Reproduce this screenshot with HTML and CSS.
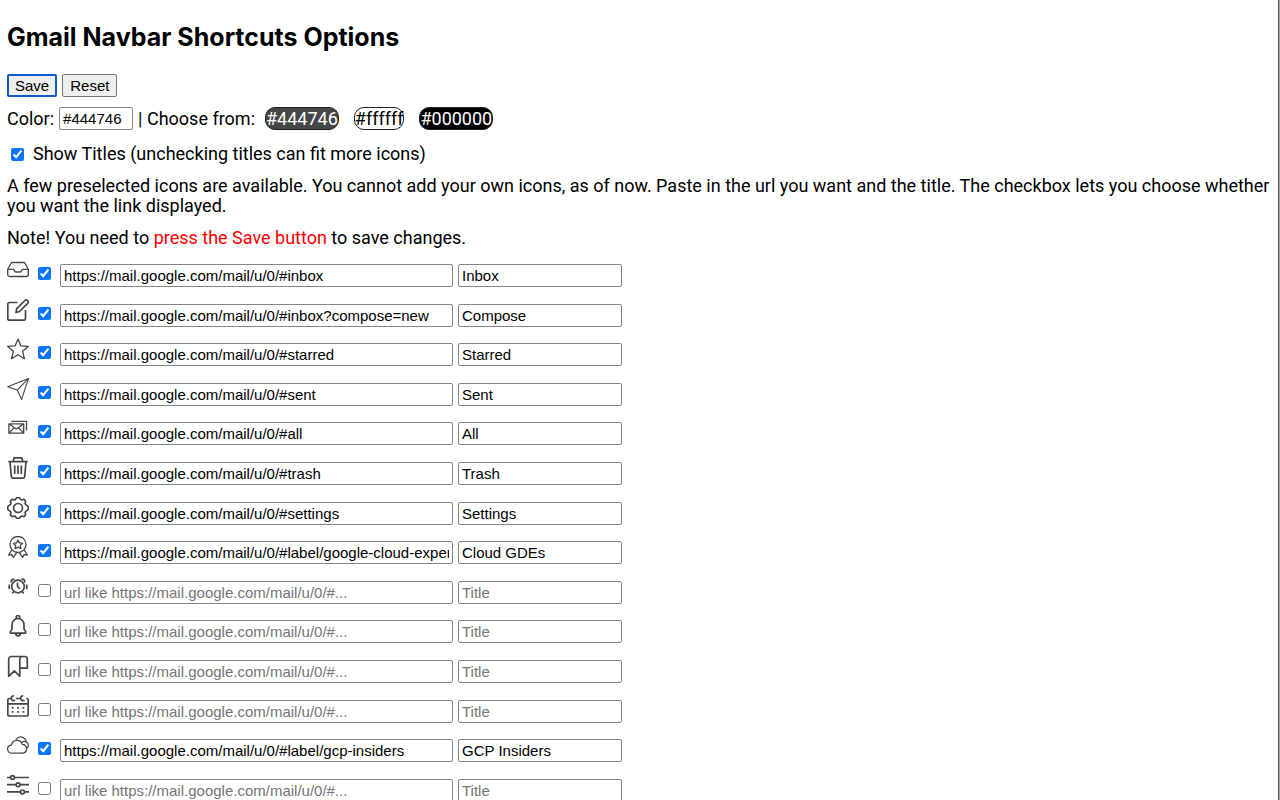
FILE: index.html
```html
<!DOCTYPE html>
<html lang="en">
<head>
<meta charset="utf-8">
<title>Gmail Navbar Shortcuts Options</title>
<link rel="stylesheet" href="styles.css">
</head>
<body>
<main class="page">
  <h1 class="title">Gmail Navbar Shortcuts Options</h1>
  <div class="actions">
    <button class="btn btn-primary" type="button">Save</button>
    <button class="btn" type="button">Reset</button>
  </div>
  <div class="colors">
    <label for="color">Color:</label>
    <input class="field color-field" id="color" type="text" value="#444746">
    <span>| Choose from:</span>
    <div class="swatches">
      <button class="swatch swatch-gray" type="button">#444746</button>
      <button class="swatch swatch-white" type="button">#ffffff</button>
      <button class="swatch swatch-black" type="button">#000000</button>
    </div>
  </div>
  <div class="show-titles">
    <input class="check" id="titles" type="checkbox" checked>
    <label for="titles">Show Titles (unchecking titles can fit more icons)</label>
  </div>
  <p class="text">A few preselected icons are available. You cannot add your own icons, as of now. Paste in the url you want and the title. The checkbox lets you choose whether you want the link displayed.</p>
  <p class="text">Note! You need to <span class="alert">press the Save button</span> to save changes.</p>

  <div class="shortcuts">
    <div class="shortcut">
      <svg class="icon" viewBox="0 0 22 22"><path d="M4.500 3.500h13l3.800 6.800v5.200a2 2 0 0 1-2 2H2.700a2 2 0 0 1-2-2v-5.200zM.7 10.300h5.800c.8 0 .9 2.700 2.300 2.700h4.400c1.400 0 1.500-2.700 2.300-2.700h5.800"/></svg>
      <input class="check" type="checkbox" aria-label="Show Inbox" checked>
      <input class="field url" type="text" aria-label="URL" placeholder="url like https://mail.google.com/mail/u/0/#..." value="https://mail.google.com/mail/u/0/#inbox">
      <input class="field name" type="text" aria-label="Title" placeholder="Title" value="Inbox">
    </div>
    <div class="shortcut">
      <svg class="icon bold" viewBox="0 0 22 22"><path d="M10.500 3.500H2.500a1.700 1.700 0 0 0-1.700 1.700v14.300a1.700 1.700 0 0 0 1.700 1.700h14.300a1.700 1.700 0 0 0 1.700-1.700V11M9 13.500l.7-3.800 8.200-8.200a1.800 1.800 0 0 1 2.600 0l.2.200a1.800 1.800 0 0 1 0 2.600l-8.200 8.200z"/></svg>
      <input class="check" type="checkbox" aria-label="Show Compose" checked>
      <input class="field url" type="text" aria-label="URL" placeholder="url like https://mail.google.com/mail/u/0/#..." value="https://mail.google.com/mail/u/0/#inbox?compose=new">
      <input class="field name" type="text" aria-label="Title" placeholder="Title" value="Compose">
    </div>
    <div class="shortcut">
      <svg class="icon" viewBox="0 0 22 22"><path d="M11 1l2.800 6.800 7.500.6-5.700 4.800 1.800 7.500-6.400-4-6.400 4 1.800-7.500L.7 8.400l7.500-.6z"/></svg>
      <input class="check" type="checkbox" aria-label="Show Starred" checked>
      <input class="field url" type="text" aria-label="URL" placeholder="url like https://mail.google.com/mail/u/0/#..." value="https://mail.google.com/mail/u/0/#starred">
      <input class="field name" type="text" aria-label="Title" placeholder="Title" value="Starred">
    </div>
    <div class="shortcut">
      <svg class="icon thin" viewBox="0 0 22 22"><path d="M21.400.6L.7 8.800l9.500 3.300 4.400 9.300zM21.400.6L10.200 12.100"/></svg>
      <input class="check" type="checkbox" aria-label="Show Sent" checked>
      <input class="field url" type="text" aria-label="URL" placeholder="url like https://mail.google.com/mail/u/0/#..." value="https://mail.google.com/mail/u/0/#sent">
      <input class="field name" type="text" aria-label="Title" placeholder="Title" value="Sent">
    </div>
    <div class="shortcut">
      <svg class="icon" viewBox="0 0 22 22"><path d="M1.900 6.800h14.800v9.400H1.900zM1.900 6.800l7.400 5.200 7.400-5.200M2.500 15.600l4.600-5M16.100 15.600l-4.600-5M4.300 4.300h15.200v9.300"/></svg>
      <input class="check" type="checkbox" aria-label="Show All" checked>
      <input class="field url" type="text" aria-label="URL" placeholder="url like https://mail.google.com/mail/u/0/#..." value="https://mail.google.com/mail/u/0/#all">
      <input class="field name" type="text" aria-label="Title" placeholder="Title" value="All">
    </div>
    <div class="shortcut">
      <svg class="icon bold" viewBox="0 0 22 22"><path d="M1.300 4.700h19.400M6.300 4.700l.7-3.800h8l.7 3.800M3 4.700l1.300 14.700a1.800 1.800 0 0 0 1.800 1.700h9.800a1.800 1.800 0 0 0 1.800-1.700L19 4.700M7.700 8.500v8.500M11 8.500v8.500M14.300 8.500v8.500"/></svg>
      <input class="check" type="checkbox" aria-label="Show Trash" checked>
      <input class="field url" type="text" aria-label="URL" placeholder="url like https://mail.google.com/mail/u/0/#..." value="https://mail.google.com/mail/u/0/#trash">
      <input class="field name" type="text" aria-label="Title" placeholder="Title" value="Trash">
    </div>
    <div class="shortcut">
      <svg class="icon bold" viewBox="0 0 22 22"><path d="M9 1.700a2.200 2.200 0 0 1 4 0c.5 1 1.300 1.400 2.400 1a2.200 2.200 0 0 1 2.900 2.900c-.4 1.100 0 1.900 1 2.400a3.200 3.200 0 0 1 0 6c-1 .5-1.400 1.300-1 2.400a2.200 2.200 0 0 1-2.900 2.900c-1.100-.4-1.900 0-2.400 1a2.200 2.200 0 0 1-4 0c-.5-1-1.300-1.400-2.400-1a2.200 2.200 0 0 1-2.900-2.900c.4-1.100 0-1.900-1-2.400a3.200 3.200 0 0 1 0-6c1-.5 1.400-1.300 1-2.400a2.200 2.200 0 0 1 2.900-2.900c1.100.4 1.900 0 2.400-1z"/><circle cx="11" cy="11" r="4.500"/></svg>
      <input class="check" type="checkbox" aria-label="Show Settings" checked>
      <input class="field url" type="text" aria-label="URL" placeholder="url like https://mail.google.com/mail/u/0/#..." value="https://mail.google.com/mail/u/0/#settings">
      <input class="field name" type="text" aria-label="Title" placeholder="Title" value="Settings">
    </div>
    <div class="shortcut">
      <svg class="icon" viewBox="0 0 22 22"><circle cx="11" cy="8.500" r="8"/><path d="M11 4l1.400 2.900 3.200.4-2.300 2.200.6 3.100-2.900-1.500-2.900 1.500.6-3.100-2.300-2.200 3.200-.4zM4.800 13.800L1.600 19l3.200-.3 1.600 2.700 3.500-5M17.200 13.800l3.200 5.200-3.200-.3-1.600 2.700-3.500-5"/></svg>
      <input class="check" type="checkbox" aria-label="Show Cloud GDEs" checked>
      <input class="field url" type="text" aria-label="URL" placeholder="url like https://mail.google.com/mail/u/0/#..." value="https://mail.google.com/mail/u/0/#label/google-cloud-experts">
      <input class="field name" type="text" aria-label="Title" placeholder="Title" value="Cloud GDEs">
    </div>
    <div class="shortcut">
      <svg class="icon bold" viewBox="0 0 22 22"><circle cx="11" cy="10.500" r="6.300"/><path d="M10.500 6.500v4l2.500 2.500M4.500 6.500a2.200 2.200 0 0 1 3-3M17.500 6.500a2.200 2.200 0 0 0-3-3M6.800 15.500l-1.500 2M15.200 15.500l1.500 2M2.500 8.500q-.8 2 0 4.500M19.500 8.500q.8 2 0 4.500"/></svg>
      <input class="check" type="checkbox" aria-label="Show shortcut 9">
      <input class="field url" type="text" aria-label="URL" placeholder="url like https://mail.google.com/mail/u/0/#...">
      <input class="field name" type="text" aria-label="Title" placeholder="Title">
    </div>
    <div class="shortcut">
      <svg class="icon bold" viewBox="0 0 22 22"><path d="M5 14V9.500a6 6 0 0 1 12 0V14c0 1 1.800 1.700 1.800 3.200 0 .7-.4 1-1 1H4.200c-.6 0-1-.3-1-1C3.200 15.700 5 15 5 14zM9.300 3.500V2.200a1.700 1.700 0 0 1 3.400 0v1.300M8.700 18.500a2.300 2.300 0 0 0 4.600 0"/></svg>
      <input class="check" type="checkbox" aria-label="Show shortcut 10">
      <input class="field url" type="text" aria-label="URL" placeholder="url like https://mail.google.com/mail/u/0/#...">
      <input class="field name" type="text" aria-label="Title" placeholder="Title">
    </div>
    <div class="shortcut">
      <svg class="icon bold" viewBox="0 0 22 22"><path d="M16.500 1.500H4.200a2.500 2.500 0 0 0-2.500 2.500v17.300l5.700-5.500 5.400 5.500V4.500a3 3 0 0 1 3-3h2a2.500 2.500 0 0 1 2.500 2.500v9.200h-7.500"/></svg>
      <input class="check" type="checkbox" aria-label="Show shortcut 11">
      <input class="field url" type="text" aria-label="URL" placeholder="url like https://mail.google.com/mail/u/0/#...">
      <input class="field name" type="text" aria-label="Title" placeholder="Title">
    </div>
    <div class="shortcut">
      <svg class="icon bold" viewBox="0 0 22 22"><path d="M3.800 3.500H2.300A1.500 1.500 0 0 0 .8 5v14.500A1.500 1.500 0 0 0 2.300 21h17.400a1.500 1.500 0 0 0 1.500-1.500V5a1.500 1.500 0 0 0-1.500-1.500h-.5M8.800 3.500h4.700M.8 8.800h20.400M6.800.9a2.400 2.400 0 1 0 1.300 4.300M16.200.9a2.400 2.400 0 1 0 1.300 4.300"/><path d="M4.700 12.800h1.800M10.100 12.800h1.800M15.500 12.800h1.800M4.700 16.800h1.800M10.100 16.800h1.800M15.500 16.800h1.800"/></svg>
      <input class="check" type="checkbox" aria-label="Show shortcut 12">
      <input class="field url" type="text" aria-label="URL" placeholder="url like https://mail.google.com/mail/u/0/#...">
      <input class="field name" type="text" aria-label="Title" placeholder="Title">
    </div>
    <div class="shortcut">
      <svg class="icon" viewBox="0 0 22 22"><path d="M4.800 19.200a4.100 4.100 0 0 1-.3-8.200 5.500 5.500 0 0 1 10.700-.7 4.500 4.500 0 0 1 .8 8.900zM9 5.500a5.500 5.500 0 0 1 10.100 2.300c2.700 1.400 2.800 5 .9 6.400M14.500 8.700a4.300 4.300 0 0 1 4.600-.9"/></svg>
      <input class="check" type="checkbox" aria-label="Show GCP Insiders" checked>
      <input class="field url" type="text" aria-label="URL" placeholder="url like https://mail.google.com/mail/u/0/#..." value="https://mail.google.com/mail/u/0/#label/gcp-insiders">
      <input class="field name" type="text" aria-label="Title" placeholder="Title" value="GCP Insiders">
    </div>
    <div class="shortcut">
      <svg class="icon bold" viewBox="0 0 22 22"><path d="M0 3.500h3.500M7.500 3.500H22M0 10.700h9M13 10.700h9M0 17.900h13.500M17.500 17.900H22"/><circle cx="5.500" cy="3.500" r="1.900"/><circle cx="11" cy="10.700" r="1.900"/><circle cx="15.500" cy="17.900" r="1.900"/></svg>
      <input class="check" type="checkbox" aria-label="Show shortcut 14">
      <input class="field url" type="text" aria-label="URL" placeholder="url like https://mail.google.com/mail/u/0/#...">
      <input class="field name" type="text" aria-label="Title" placeholder="Title">
    </div>
  </div>
</main>
</body>
</html>
```
FILE: styles.css
```css
* { box-sizing: border-box; }

body {
  margin: 0;
  padding-right: 1px;
  background: #a8a8a8;
  color: #000;
  font: 18px/20px Roboto, "Liberation Sans", sans-serif;
}

.page {
  min-height: 100vh;
  padding: 20px 4px 0 7px;
  border-right: 1px solid #555;
  background: #fff;
}

.title {
  margin: 0 0 20px;
  font: 700 25px/34px Inter, "Liberation Sans", sans-serif;
}

.actions {
  display: flex;
  gap: 5px;
  margin-bottom: 10px;
}

.btn {
  height: 23px;
  padding: 0 7px;
  border: 1px solid #767676;
  border-radius: 2px;
  background: #efefef;
  color: #000;
  font: 15px/20px "Liberation Sans", Arial, sans-serif;
}

.btn-primary {
  padding: 0 6px;
  border: 2px solid #0a5ccf;
}

.colors {
  display: flex;
  align-items: center;
  gap: 5px;
  margin-bottom: 14px;
}

.field {
  height: 23px;
  padding: 0 3px;
  border: 1px solid #858585;
  border-radius: 2px;
  background: #fff;
  color: #000;
  font: 15px/20px "Liberation Sans", Arial, sans-serif;
}

.field::placeholder { color: #757575; }

.color-field { width: 74px; }

.swatches {
  display: flex;
  gap: 15px;
  margin-left: 5px;
}

.swatch {
  height: 23px;
  padding: 0;
  border: 1px solid #222;
  border-radius: 10px;
  font: inherit;
}

.swatch-gray { background: #444746; color: #fff; }
.swatch-white { background: #fff; color: #000; }
.swatch-black { background: #000; color: #fff; }

.show-titles {
  display: flex;
  align-items: center;
  gap: 9px;
  margin-bottom: 12px;
  padding-left: 4px;
}

.check {
  width: 13px;
  height: 13px;
  margin: 0;
  accent-color: #0a75ff;
}

.text { margin: 0 0 12px; }

.alert { color: #f00; }

.shortcuts {
  margin-top: -1px;
  font-size: 18px;
}

.shortcut {
  display: flex;
  align-items: flex-start;
  height: 2.2em;
}

.icon {
  width: 22px;
  height: 22px;
  fill: none;
  stroke: #444746;
  stroke-width: 1.3;
  stroke-linejoin: round;
}

.icon.bold { stroke-width: 1.7; }
.icon.thin { stroke-width: 1.1; }

.shortcut .check { margin: 8px 9px 0; }

.shortcut .field { margin-top: 5px; }

.url { width: 393px; }

.name {
  width: 164px;
  margin-left: 5px;
}
```
